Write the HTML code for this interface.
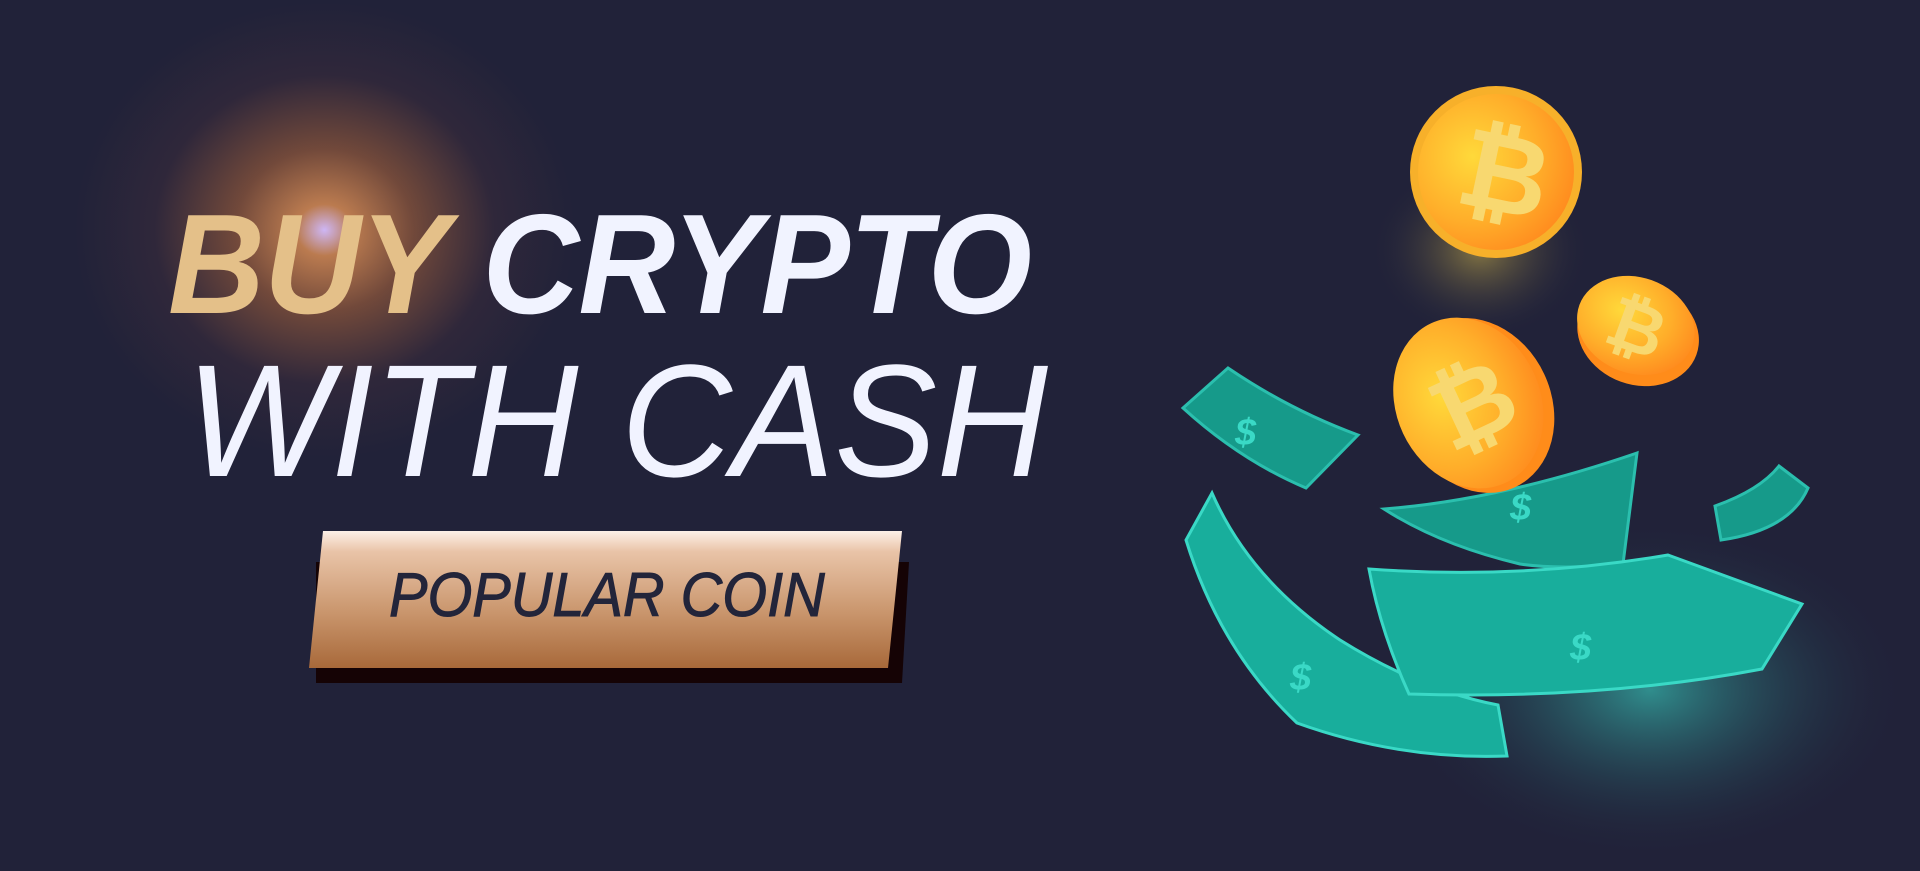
<!DOCTYPE html>
<html><head><meta charset="utf-8"><style>
html,body{margin:0;padding:0;}
body{width:1920px;height:871px;background:#212239;position:relative;overflow:hidden;font-family:"Liberation Sans",sans-serif;}
.glow{position:absolute;left:50px;top:-30px;width:560px;height:520px;background:radial-gradient(ellipse at 49% 50%,rgba(215,190,255,0.95) 0,rgba(225,145,85,0.8) 7%,rgba(180,105,60,0.55) 22%,rgba(90,55,60,0.25) 42%,rgba(33,34,57,0) 62%);}
.t{position:absolute;white-space:nowrap;font-style:italic;transform-origin:0 0;line-height:1;}
.l1{left:168px;top:194px;font-size:142px;font-weight:bold;color:#f1f3ff;letter-spacing:-1px;transform:scaleX(0.945);}
.l1 span{color:#e4c089;}
.l2{left:186px;top:341px;font-size:160px;color:#f1f3ff;transform:scaleX(0.96);}
.btn{position:absolute;}
.bt{position:absolute;left:389px;top:565px;font-size:62px;color:#23253a;font-style:italic;white-space:nowrap;transform:scaleX(0.93);transform-origin:0 0;line-height:1;-webkit-text-stroke:1px #23253a;}
</style></head><body>
<div class="glow"></div>
<div class="t l1"><span>BUY</span> CRYPTO</div>
<div class="t l2">WITH CASH</div>
<svg class="btn" width="1920" height="871" style="left:0;top:0" viewBox="0 0 1920 871">
<defs>
<linearGradient id="bg" x1="0" y1="0" x2="0" y2="1">
<stop offset="0" stop-color="#fdf0e8"/><stop offset="0.15" stop-color="#e9c4a8"/><stop offset="0.6" stop-color="#c9956c"/><stop offset="1" stop-color="#a8693a"/></linearGradient>
<radialGradient id="cg" cx="0.35" cy="0.4" r="0.7"><stop offset="0" stop-color="#ffd93a"/><stop offset="0.6" stop-color="#ffae2a"/><stop offset="1" stop-color="#ff8a1e"/></radialGradient>
<radialGradient id="tg" cx="0.5" cy="0.5" r="0.5"><stop offset="0" stop-color="rgba(60,230,210,0.55)"/><stop offset="1" stop-color="rgba(33,34,57,0)"/></radialGradient>
<radialGradient id="yg" cx="0.5" cy="0.5" r="0.5"><stop offset="0" stop-color="rgba(255,220,80,0.45)"/><stop offset="1" stop-color="rgba(33,34,57,0)"/></radialGradient>
</defs>
<polygon points="316,562 909,562 902,683 316,683" fill="#150305"/>
<polygon points="323,531 902,531 888,668 309,668" fill="url(#bg)"/>
<ellipse cx="1650" cy="690" rx="260" ry="170" fill="url(#tg)"/>
<ellipse cx="1480" cy="250" rx="110" ry="90" fill="url(#yg)"/>
<g fill="#169a8a" stroke="#2bbfae" stroke-width="3">
<path d="M1183,408 L1228,368 Q1290,410 1358,435 L1306,488 Q1240,460 1183,408Z"/>
<path d="M1384,509 Q1500,500 1637,453 L1623,564 Q1560,570 1520,564 Q1440,545 1384,509Z"/>
<path d="M1715,506 Q1760,490 1779,466 L1808,488 Q1790,530 1721,540Z"/>
</g>
<g fill="#18ae9c" stroke="#3ad9c6" stroke-width="3">
<path d="M1212,493 L1186,540 Q1220,650 1297,723 Q1400,760 1507,756 L1498,705 Q1420,690 1340,640 Q1250,580 1212,493Z"/>
<path d="M1369,569 Q1520,580 1668,555 L1802,604 Q1780,640 1762,669 Q1600,700 1409,694 Q1380,630 1369,569Z"/>
</g>
<g fill="#3ad9c6" font-family="Liberation Sans" font-size="38" font-weight="bold" font-style="italic">
<text x="1235" y="445">$</text><text x="1510" y="520">$</text><text x="1290" y="690">$</text><text x="1570" y="660">$</text>
</g>
<g>
<circle cx="1496" cy="172" r="86" fill="#f7b02a"/>
<circle cx="1496" cy="172" r="78" fill="url(#cg)"/>
<text x="1460" y="210" font-family="Liberation Sans" font-weight="bold" font-size="110" fill="#f8d870" transform="rotate(12 1496 172)">₿</text>
</g>
<g transform="rotate(20 1637 328)">
<ellipse cx="1640" cy="333" rx="62" ry="51" fill="#ff8c1a"/>
<ellipse cx="1635" cy="326" rx="60" ry="48" fill="url(#cg)"/>
<text x="1608" y="352" font-family="Liberation Sans" font-weight="bold" font-size="70" fill="#f8d870">₿</text>
</g>
<g transform="rotate(-25 1471 404)">
<ellipse cx="1476" cy="408" rx="74" ry="90" fill="#ff8c1a"/>
<ellipse cx="1469" cy="402" rx="72" ry="88" fill="url(#cg)"/>
<text x="1432" y="440" font-family="Liberation Sans" font-weight="bold" font-size="100" fill="#f8d870">₿</text>
</g>
</svg>
<div class="bt">POPULAR COIN</div>
</body></html>
